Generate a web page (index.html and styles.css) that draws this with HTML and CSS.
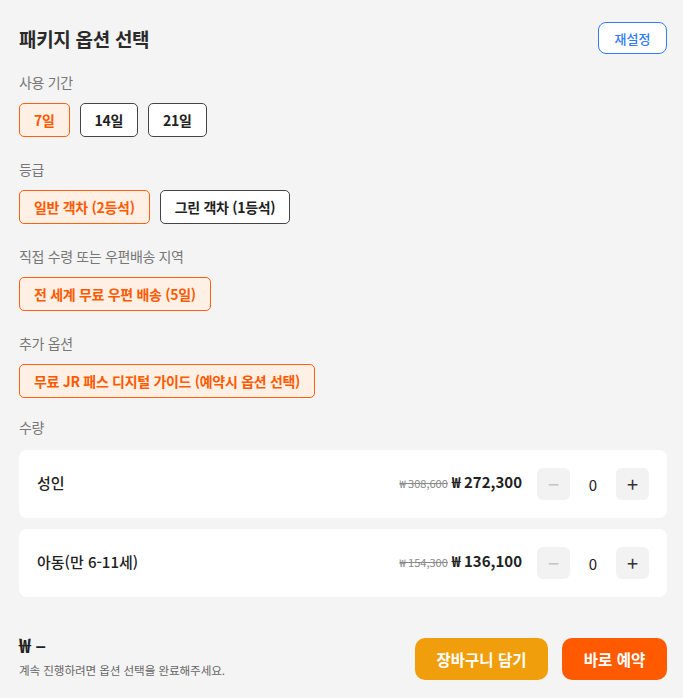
FILE: index.html
```html
<!DOCTYPE html>
<html lang="ko">
<head>
<meta charset="utf-8">
<link rel="stylesheet" href="styles.css">
</head>
<body>
<div class="panel">
  <div class="head">
    <h1 class="title">패키지 옵션 선택</h1>
    <button class="reset">재설정</button>
  </div>

  <section class="group">
    <div class="label">사용 기간</div>
    <div class="chips">
      <button class="chip on">7일</button>
      <button class="chip">14일</button>
      <button class="chip">21일</button>
    </div>
  </section>

  <section class="group">
    <div class="label">등급</div>
    <div class="chips">
      <button class="chip on">일반 객차 (2등석)</button>
      <button class="chip">그린 객차 (1등석)</button>
    </div>
  </section>

  <section class="group">
    <div class="label">직접 수령 또는 우편배송 지역</div>
    <div class="chips">
      <button class="chip on">전 세계 무료 우편 배송 (5일)</button>
    </div>
  </section>

  <section class="group">
    <div class="label">추가 옵션</div>
    <div class="chips">
      <button class="chip on">무료 JR 패스 디지털 가이드 (예약시 옵션 선택)</button>
    </div>
  </section>

  <section class="group qty">
    <div class="label">수량</div>
    <div class="cards">
      <div class="card">
        <span class="who">성인</span>
        <div class="price"><s class="old">₩ 308,600</s><b class="now">₩ 272,300</b></div>
        <div class="stepper">
          <button class="step dis">−</button>
          <span class="count">0</span>
          <button class="step">+</button>
        </div>
      </div>
      <div class="card">
        <span class="who">아동(만 6-11세)</span>
        <div class="price"><s class="old">₩ 154,300</s><b class="now">₩ 136,100</b></div>
        <div class="stepper">
          <button class="step dis">−</button>
          <span class="count">0</span>
          <button class="step">+</button>
        </div>
      </div>
    </div>
  </section>

  <div class="footer">
    <div class="total">
      <div class="sum">₩ –</div>
      <div class="hint">계속 진행하려면 옵션 선택을 완료해주세요.</div>
    </div>
    <div class="actions">
      <button class="btn cart">장바구니 담기</button>
      <button class="btn book">바로 예약</button>
    </div>
  </div>
</div>
</body>
</html>
```

FILE: styles.css
```css
* { box-sizing: border-box; }
html, body { margin: 0; padding: 0; background: #f4f4f4; }
body {
  font-family: "Noto Sans CJK KR", "Noto Sans", sans-serif;
  color: #222;
}
button { font-family: inherit; cursor: pointer; }
.panel {
  padding: 22px 16px 0 19px;
}
.head {
  display: flex;
  justify-content: space-between;
  align-items: center;
  height: 32px;
}
.title {
  margin: 0;
  font-size: 19px;
  font-weight: 700;
  color: #2a2a2a;
  letter-spacing: -0.3px;
}
.reset {
  width: 69px;
  height: 32px;
  border: 1px solid #2f7cf6;
  border-radius: 8px;
  background: #fff;
  color: #2f7cf6;
  font-size: 13px;
  font-weight: 500;
  padding: 0;
}
.group { margin-top: 21px; }
.group + .group { margin-top: 25px; }
.group.qty { margin-top: 22px; }
.label {
  font-size: 14px;
  line-height: 14px;
  color: #777;
  letter-spacing: -0.35px;
}
.chips {
  display: flex;
  gap: 10px;
  margin-top: 14px;
}
.chip {
  height: 34px;
  padding: 0 14px;
  border: 1px solid #444;
  border-radius: 5px;
  background: #fff;
  color: #222;
  font-size: 14px;
  font-weight: 700;
  letter-spacing: -0.3px;
}
.chip.on {
  border-color: #ff5f0f;
  background: #fff0e6;
  color: #ff5a00;
}
.cards {
  margin-top: 16px;
  display: flex;
  flex-direction: column;
  gap: 11px;
}
.card {
  height: 68px;
  background: #fff;
  border-radius: 8px;
  display: flex;
  align-items: center;
  padding: 0 18px;
}
.who {
  font-size: 15px;
  font-weight: 500;
  color: #222;
  flex: 1;
  margin-top: -4px;
}
.price {
  display: flex;
  align-items: baseline;
  gap: 4px;
  margin-top: -6px;
}
.old {
  font-size: 11px;
  color: #888;
}
.now {
  font-size: 15px;
  font-weight: 700;
  color: #222;
}
.stepper {
  display: flex;
  align-items: center;
  margin-left: 15px;
}
.step {
  width: 33px;
  height: 32px;
  border: none;
  border-radius: 6px;
  background: #f2f2f2;
  color: #333;
  font-size: 20px;
  line-height: 1;
  padding: 0;
}
.step.dis { color: #c4c4c4; }
.count {
  width: 46px;
  text-align: center;
  font-size: 15px;
  color: #222;
}
.footer {
  margin-top: 41px;
  display: flex;
  justify-content: space-between;
  align-items: center;
}
.total { margin-top: -8px; }
.sum {
  font-size: 20px;
  font-weight: 700;
  line-height: 26px;
  color: #222;
}
.hint {
  font-size: 11.6px;
  color: #666;
  margin-top: 4px;
  letter-spacing: -0.1px;
}
.actions {
  display: flex;
  gap: 14px;
}
.btn {
  height: 42px;
  border: none;
  border-radius: 10px;
  color: #fff;
  font-size: 15.5px;
  font-weight: 700;
  padding: 0;
}
.cart { width: 133px; background: #f09e0c; }
.book { width: 105px; background: #ff5a00; }
```
